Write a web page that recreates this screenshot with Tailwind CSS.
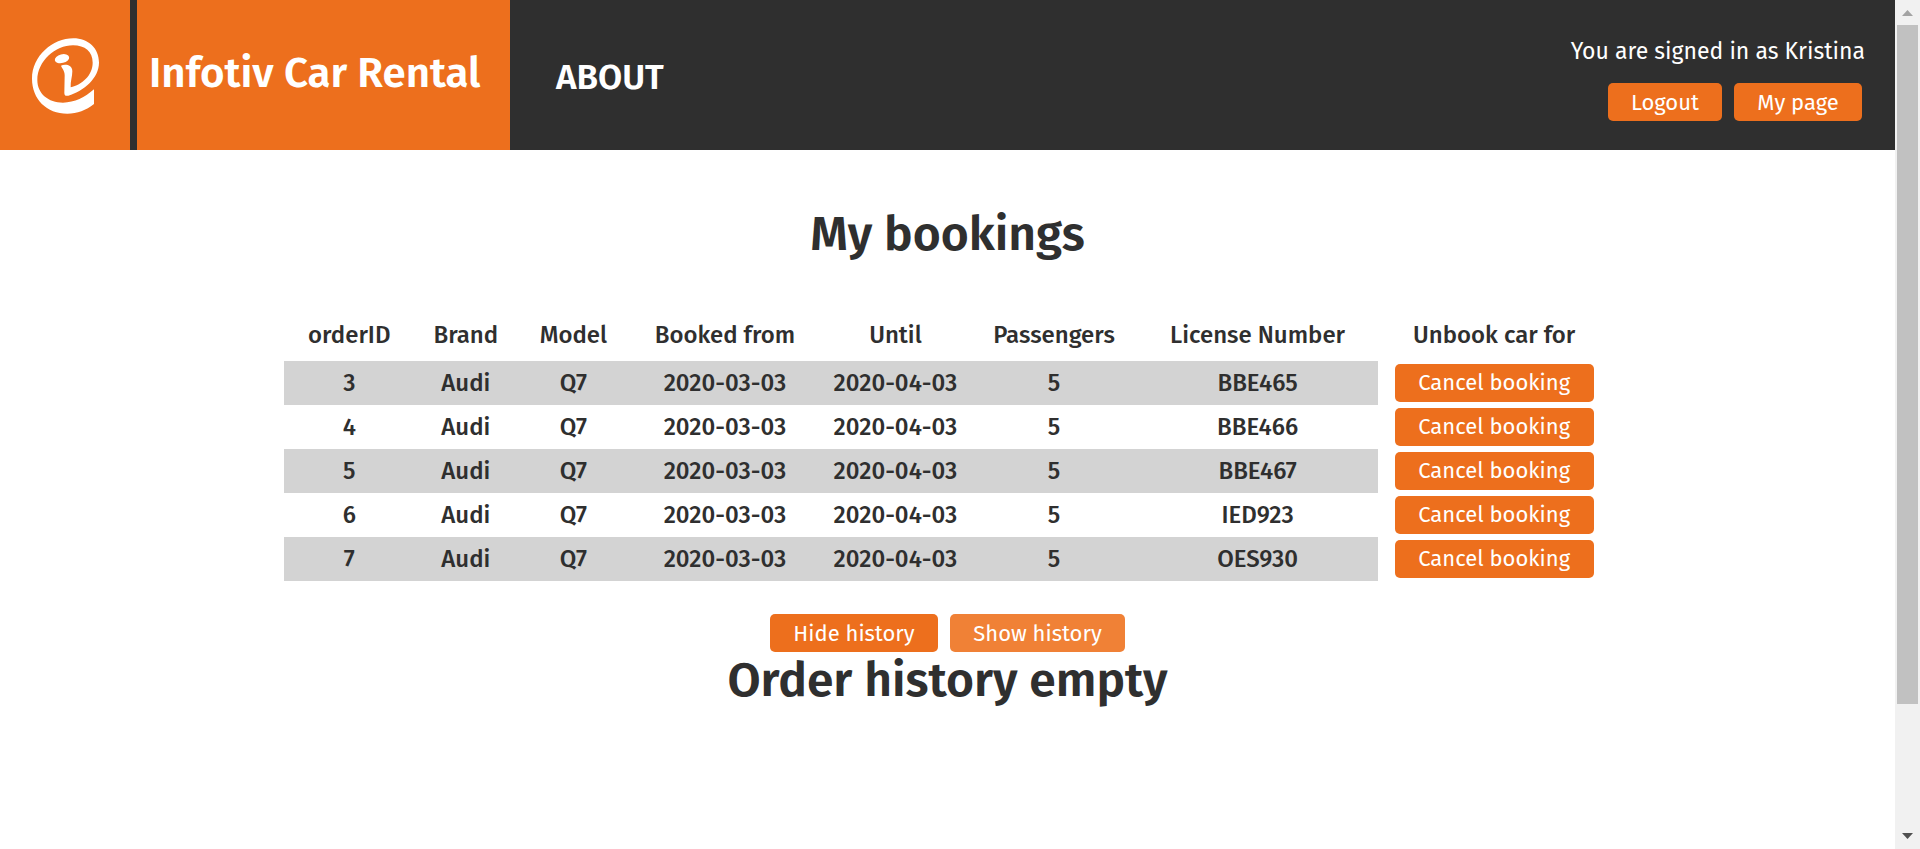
<!DOCTYPE html>
<html lang="en">
<head>
<meta charset="utf-8">
<title>Infotiv Car Rental</title>
<script src="https://cdn.jsdelivr.net/npm/@tailwindcss/browser@4"></script>
</head>
<body class="flex h-screen overflow-hidden bg-white font-['Fira_Sans','Lato',sans-serif] text-[#2f2f2f]">
<div class="min-w-0 flex-1">
  <header class="flex h-[150px] bg-[#2f2f2f] text-white">
    <a href="#" aria-label="Infotiv" class="mr-[7px] block w-[130px] shrink-0 bg-[#ed6f1d]">
      <svg viewBox="0 0 390 450" class="h-full w-full" fill="#fff" aria-hidden="true">
        <path d="M282 268V312C258 331 232 341 202 341C140 341 96 297 96 236C96 168 158 115 220 115C265 115 297 145 297 188C297 234 252 272 205 287C197 289 193 286 193 279L194 226C194 212 187 207 183 197C194 192 217 193 217 214C217 230 211 245 212 262C246 254 278 226 278 188C278 155 255 136 219 136C166 136 112 184 112 240C112 281 145 308 189 308C224 308 255 292 282 268Z"/>
        <ellipse cx="186" cy="176" rx="22" ry="13" transform="rotate(-14 186 176)"/>
      </svg>
    </a>
    <a href="#" class="flex shrink-0 items-center bg-[#ed6f1d] pr-[26px] pb-1 pl-3"><h1 class="w-[335px] text-[42px] font-semibold whitespace-nowrap">Infotiv Car Rental</h1></a>
    <nav class="flex items-center pt-1 pl-[46px]"><a href="#" class="text-[35px] font-semibold">ABOUT</a></nav>
    <div class="ml-auto flex flex-col items-end pt-[33px] pr-[30px]">
      <p class="text-[23px] leading-9">You are signed in as Kristina</p>
      <div class="mt-[14px] mr-[3px] flex gap-3 text-[22px]">
        <button class="h-[38px] w-[114px] rounded-[5px] bg-[#ed6f1d]">Logout</button>
        <button class="h-[38px] w-32 rounded-[5px] bg-[#ed6f1d]">My page</button>
      </div>
    </div>
  </header>
  <main>
    <h2 class="mt-[52px] text-center text-[48px] leading-[64px] font-semibold">My bookings</h2>
    <table class="mx-auto mt-[42px] w-[70%] table-fixed text-center text-2xl font-medium">
      <colgroup>
        <col class="w-[130px]"><col class="w-[103px]"><col class="w-[112px]"><col class="w-[191px]"><col class="w-[150px]"><col class="w-[167px]"><col class="w-[240px]"><col class="w-[233px]">
      </colgroup>
      <thead>
        <tr class="h-[53px] whitespace-nowrap">
          <th class="font-medium">orderID</th><th class="font-medium">Brand</th><th class="font-medium">Model</th><th class="font-medium">Booked from</th><th class="font-medium">Until</th><th class="font-medium">Passengers</th><th class="font-medium">License Number</th><th class="font-medium">Unbook car for</th>
        </tr>
      </thead>
      <tbody>
        <tr class="h-11"><td class="bg-[#d3d3d3]">3</td><td class="bg-[#d3d3d3]">Audi</td><td class="bg-[#d3d3d3]">Q7</td><td class="bg-[#d3d3d3]">2020-03-03</td><td class="bg-[#d3d3d3]">2020-04-03</td><td class="bg-[#d3d3d3]">5</td><td class="bg-[#d3d3d3]">BBE465</td><td><button class="mx-auto block h-[38px] w-[199px] rounded-[5px] bg-[#ed6f1d] text-[22px] font-normal text-white">Cancel booking</button></td></tr>
        <tr class="h-11"><td>4</td><td>Audi</td><td>Q7</td><td>2020-03-03</td><td>2020-04-03</td><td>5</td><td>BBE466</td><td><button class="mx-auto block h-[38px] w-[199px] rounded-[5px] bg-[#ed6f1d] text-[22px] font-normal text-white">Cancel booking</button></td></tr>
        <tr class="h-11"><td class="bg-[#d3d3d3]">5</td><td class="bg-[#d3d3d3]">Audi</td><td class="bg-[#d3d3d3]">Q7</td><td class="bg-[#d3d3d3]">2020-03-03</td><td class="bg-[#d3d3d3]">2020-04-03</td><td class="bg-[#d3d3d3]">5</td><td class="bg-[#d3d3d3]">BBE467</td><td><button class="mx-auto block h-[38px] w-[199px] rounded-[5px] bg-[#ed6f1d] text-[22px] font-normal text-white">Cancel booking</button></td></tr>
        <tr class="h-11"><td>6</td><td>Audi</td><td>Q7</td><td>2020-03-03</td><td>2020-04-03</td><td>5</td><td>IED923</td><td><button class="mx-auto block h-[38px] w-[199px] rounded-[5px] bg-[#ed6f1d] text-[22px] font-normal text-white">Cancel booking</button></td></tr>
        <tr class="h-11"><td class="bg-[#d3d3d3]">7</td><td class="bg-[#d3d3d3]">Audi</td><td class="bg-[#d3d3d3]">Q7</td><td class="bg-[#d3d3d3]">2020-03-03</td><td class="bg-[#d3d3d3]">2020-04-03</td><td class="bg-[#d3d3d3]">5</td><td class="bg-[#d3d3d3]">OES930</td><td><button class="mx-auto block h-[38px] w-[199px] rounded-[5px] bg-[#ed6f1d] text-[22px] font-normal text-white">Cancel booking</button></td></tr>
      </tbody>
    </table>
    <div class="mt-[33px] flex justify-center gap-3 text-[22px] text-white">
      <button class="h-[38px] w-[168px] rounded-[5px] bg-[#ed6f1d]">Hide history</button>
      <button class="h-[38px] w-[175px] rounded-[5px] bg-[#f08136]">Show history</button>
    </div>
    <h2 class="-mt-1 text-center text-[48px] leading-[64px] font-semibold">Order history empty</h2>
  </main>
</div>
<div class="flex w-[25px] shrink-0 flex-col items-center bg-[#f1f1f1]" aria-hidden="true">
  <svg viewBox="0 0 25 25" class="size-[25px] shrink-0" fill="#a3a3a3"><path d="M7 16L12.500 10L18 16Z"/></svg>
  <div class="h-[679px] w-[21px] bg-[#c1c1c1]"></div>
  <svg viewBox="0 0 25 25" class="mt-auto size-[25px] shrink-0" fill="#505050"><path d="M7 9H18L12.500 15Z"/></svg>
</div>
</body>
</html>
